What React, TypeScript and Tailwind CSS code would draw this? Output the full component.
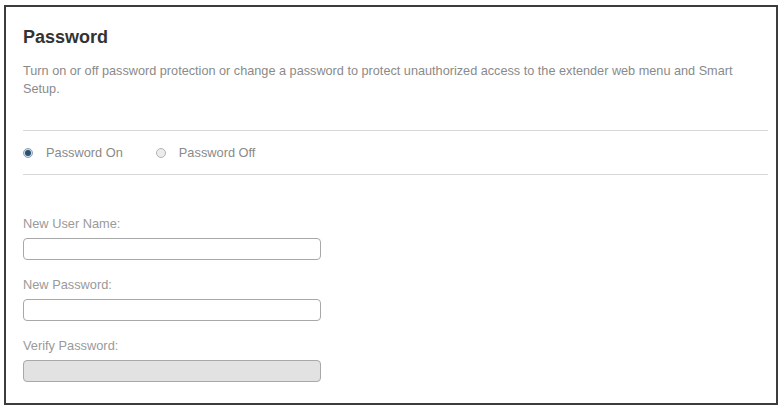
import { useState } from 'react';

const FONT = "font-['Liberation_Sans',Arial,sans-serif]";

function Field({ label, disabled }: { label: string; disabled?: boolean }) {
  return (
    <div className="flex flex-col">
      <label className="text-[12.8px] leading-[15px] text-[#9a9a9a]">{label}</label>
      <input
        type="text"
        disabled={disabled}
        className={[
          'mt-[7px] w-[298px] h-[22px] rounded-[4px] border border-[#a8a8a8] outline-none',
          disabled ? 'bg-[#e2e2e2]' : 'bg-white',
        ].join(' ')}
      />
    </div>
  );
}

function Radio({ checked, label, onClick }: { checked: boolean; label: string; onClick: () => void }) {
  return (
    <button type="button" onClick={onClick} className="flex items-center gap-[13px]">
      <span
        className={[
          'w-[10px] h-[10px] rounded-full border flex items-center justify-center',
          checked ? 'border-[#8fa3b3] bg-[#c9dbe8]' : 'border-[#b4b4b4] bg-[#ececec]',
        ].join(' ')}
      >
        {checked && <span className="w-[6px] h-[6px] rounded-full bg-[#2c4f6e]" />}
      </span>
      {label}
    </button>
  );
}

export default function App() {
  const [on, setOn] = useState(true);

  return (
    <div className={`w-[781px] h-[409px] bg-white pl-[4px] pt-[5px] ${FONT}`}>
      <div className="w-[774px] h-[400px] border-2 border-[#3c3c3c] pl-[17px] pr-[8px] pt-[19px]">
        <h2 className="text-[18px] leading-[22px] font-bold text-[#333]">Password</h2>
        <p className="mt-[14px] text-[12.7px] leading-[18px] text-[#8a8a8a] pr-[10px]">
          Turn on or off password protection or change a password to protect unauthorized access to the extender web menu and Smart Setup.
        </p>

        <div className="mt-[32px] border-t border-[#d8d8d8]" />
        <div className="h-[43px] flex items-center gap-[33px] text-[12.8px] text-[#8a8a8a]">
          <Radio checked={on} label="Password On" onClick={() => setOn(true)} />
          <Radio checked={!on} label="Password Off" onClick={() => setOn(false)} />
        </div>
        <div className="border-t border-[#d8d8d8]" />

        <div className="mt-[41px] flex flex-col gap-[17px]">
          <Field label="New User Name:" />
          <Field label="New Password:" />
          <Field label="Verify Password:" disabled />
        </div>
      </div>
    </div>
  );
}
